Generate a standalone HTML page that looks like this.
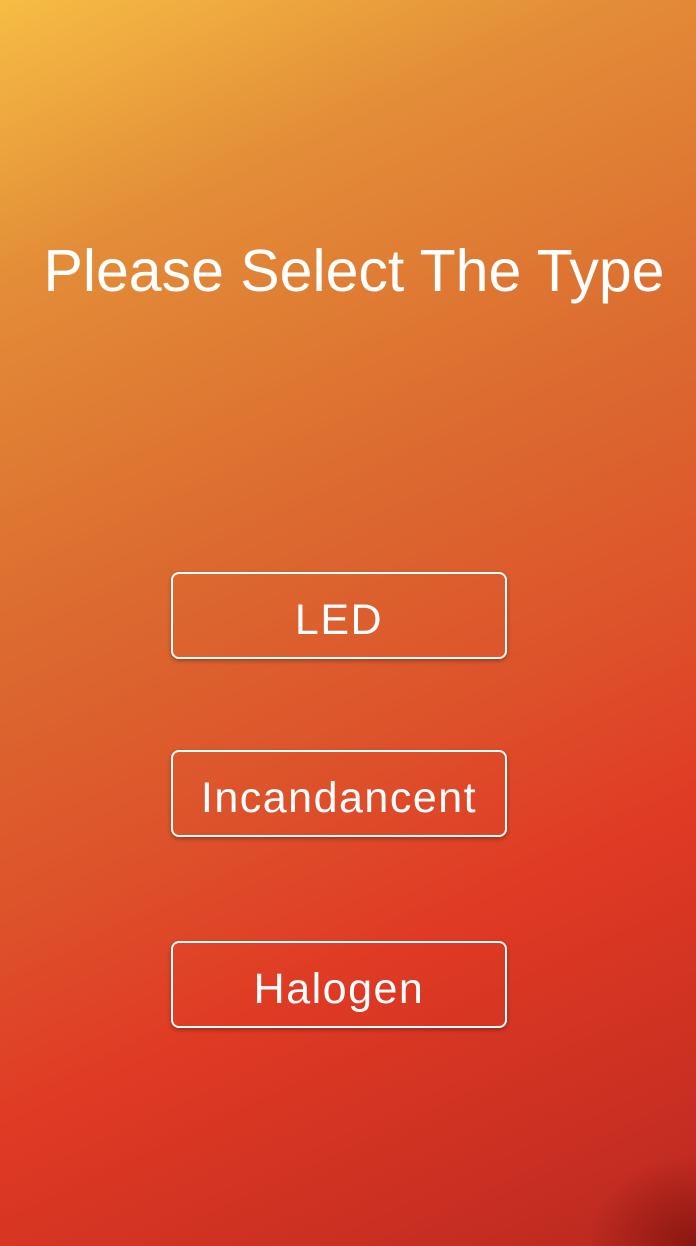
<!DOCTYPE html>
<html><head><style>
html,body{margin:0;padding:0}
body{width:696px;height:1246px;position:relative;overflow:hidden;
background:
radial-gradient(ellipse 110px 90px at 696px 1246px, rgba(130,20,15,0.85), rgba(130,20,15,0) 100%),
linear-gradient(155deg,#f6bd44 0%,#e38d38 18%,#dc6c30 40%,#dd532b 58%,#e03a24 72%,#c92f22 90%,#b8281f 100%);
font-family:"Liberation Sans",sans-serif;color:#fff}
h1{position:absolute;top:236px;left:0;width:696px;margin:0;text-align:center;font-weight:normal;font-size:59px;line-height:70px;padding-left:12px;box-sizing:border-box;white-space:nowrap}
.b{position:absolute;left:171px;width:332px;height:83px;border:2.5px solid #fff;border-radius:8px;box-shadow:0 2px 4px rgba(0,0,0,0.3);text-align:center;line-height:93px;font-size:43px;font-weight:300;letter-spacing:1.5px}
</style></head><body>
<h1>Please Select The Type</h1>
<div class="b" style="top:572px">LED</div>
<div class="b" style="top:750px">Incandancent</div>
<div class="b" style="top:941px">Halogen</div>
</body></html>
